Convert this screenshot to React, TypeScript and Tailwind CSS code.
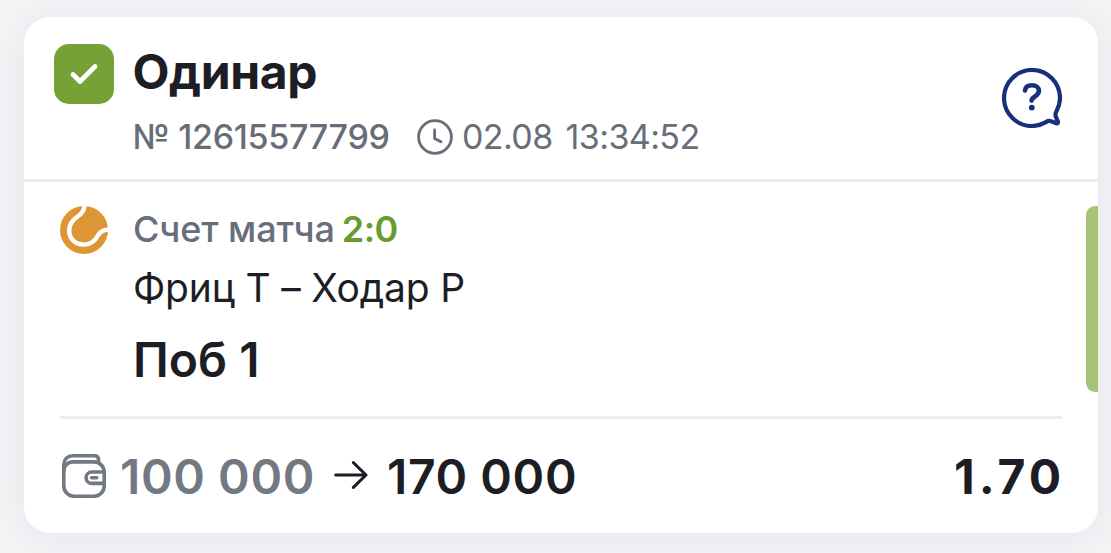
import { FunctionComponent } from "react";

type IconProps = {
  className?: string;
};

const CheckIcon: FunctionComponent<IconProps> = ({ className = "" }) => (
  <svg className={className} viewBox="0 0 60 60" fill="none">
    <path
      d="M19 30.5 L26 37.5 L41 22.5"
      stroke="white"
      strokeWidth="4.8"
      strokeLinecap="round"
      strokeLinejoin="round"
    />
  </svg>
);

const ClockIcon: FunctionComponent<IconProps> = ({ className = "" }) => (
  <svg className={className} viewBox="0 0 36 36" fill="none" stroke="currentColor">
    <circle cx="18" cy="18" r="16.4" strokeWidth="2.8" />
    <path d="M17.6 11 V19.4 L24 22.8" strokeWidth="2.8" strokeLinecap="round" strokeLinejoin="round" />
  </svg>
);

const QuestionIcon: FunctionComponent<IconProps> = ({ className = "" }) => (
  <svg className={className} viewBox="0 0 60 60" fill="none" stroke="currentColor">
    <path
      d="M46 53 C44 54 38.5 58 30 58 A28 28 0 1 1 58 30 C58 36 55.8 40.8 54.4 43.4 C53.2 45.8 53.2 46.8 53.7 48.4 L55.9 53.6 C56.3 54.9 55.6 55.6 54.2 55.2 L49.6 53.4 C48.2 52.9 47.4 52.4 46 53 Z"
      strokeWidth="4.2"
      strokeLinejoin="round"
    />
    <path
      d="M23 22.4 C23.4 19 26.2 17.2 30 17.2 C34 17.2 36.9 19.4 36.9 22.8 C36.9 26 34.8 27.3 32.4 29 C30.4 30.4 29.6 31.2 29.6 32.6"
      strokeWidth="4.6"
      strokeLinecap="round"
    />
    <circle cx="29.8" cy="39.6" r="2.9" fill="currentColor" stroke="none" />
  </svg>
);

const TennisIcon: FunctionComponent<IconProps> = ({ className = "" }) => (
  <svg className={className} viewBox="0 0 48 48" fill="none">
    <circle cx="24" cy="24" r="24" fill="#de9534" />
    <path
      d="M24.6 -1 C24.4 3 22.8 6.4 19.5 9 C14 13 9.2 16.8 9.2 24.4 C9.2 32.8 15.4 38.6 23.6 38.6 C30.4 38.6 34.8 35.2 37.6 30 C39.8 26 43.4 23.6 49 23.4"
      stroke="white"
      strokeWidth="4.4"
    />
  </svg>
);

const WalletIcon: FunctionComponent<IconProps> = ({ className = "" }) => (
  <svg className={className} viewBox="0 0 44 44" fill="none" stroke="currentColor" strokeWidth="3.6">
    <path d="M1.8 17 V10.5 A8.7 8.7 0 0 1 10.5 1.8 H32 Q36.3 1.8 36.6 5.5 V8" strokeLinecap="round" />
    <path d="M1.8 17 A9.2 9.2 0 0 1 11 7.9 H32 A10.2 10.2 0 0 1 42.2 18 V32 A10.2 10.2 0 0 1 32 42.2 H12 A10.2 10.2 0 0 1 1.8 32 Z" />
    <path d="M42 18 H29.8 A5.7 5.7 0 0 0 29.8 29.4 H42" />
    <path d="M29.6 23.7 H34.8" strokeLinecap="round" />
  </svg>
);

const ArrowIcon: FunctionComponent<IconProps> = ({ className = "" }) => (
  <svg
    className={className}
    viewBox="0 0 34 28"
    fill="none"
    stroke="currentColor"
    strokeWidth="3"
    strokeLinecap="round"
    strokeLinejoin="round"
  >
    <path d="M1.7 14 H32 M19.4 1.6 L32 14 L19.4 26.4" />
  </svg>
);

const BetHeader = () => (
  <div className="flex h-[165px] items-start border-b-3 border-[#ebecee] pl-[30px] pr-9 pt-[25px]">
    <div className="mt-0.5 size-[60px] shrink-0 rounded-[15px] bg-[#75a136]">
      <CheckIcon className="size-full" />
    </div>
    <div className="ml-[18.5px] flex-1">
      <h1 className="text-[48px] leading-[60px] font-bold tracking-[-0.4px]">{bet.title}</h1>
      <div className="mt-[15px] flex items-center text-[34px] leading-10 text-[#676e79]">
        <span className="w-[284.5px] font-medium tracking-[-0.3px]">№ {bet.number}</span>
        <ClockIcon className="size-9 shrink-0" />
        <span className="ml-[9px] tracking-[-0.6px] [word-spacing:4px]">{bet.date}</span>
      </div>
    </div>
    <QuestionIcon className="mt-[26px] size-[60px] text-[#182f7c]" />
  </div>
);

const BetEvent = () => (
  <div className="flex h-[234px] justify-between">
    <div className="flex pl-9 pt-6">
      <TennisIcon className="size-12 shrink-0" />
      <div className="ml-[25px] pt-px">
        <div className="flex gap-[7px] text-[36px] leading-11">
          <span className="font-medium tracking-[-0.1px] text-[#676e7d]">Счет матча</span>
          <span className="font-semibold tracking-[-0.6px] text-[#699c2d]">{bet.score}</span>
        </div>
        <div className="mt-[13px] text-[39px] leading-12 tracking-[-0.2px]">{bet.players}</div>
        <div className="mt-[18px] text-[48px] leading-[60px] font-semibold">{bet.outcome}</div>
      </div>
    </div>
    <div className="mt-6 h-[186px] w-3 rounded-l-[9px] bg-[#a4c478]" />
  </div>
);

const BetFooter = () => (
  <div className="mx-9 flex items-center border-t-3 border-[#ebecf1] pt-7 text-[48px] leading-[60px] font-semibold">
    <WalletIcon className="-mt-0.5 ml-0.5 size-11 text-[#737983]" />
    <span className="ml-[14px] w-[214px] whitespace-nowrap tracking-[0.6px] text-[#737983]">{bet.stake}</span>
    <ArrowIcon className="-mt-1 h-7 w-[34px]" />
    <span className="ml-[19px] tracking-[0.6px]">{bet.payout}</span>
    <span className="-mr-[3px] ml-auto font-bold tracking-[4px]">{bet.odds}</span>
  </div>
);

const App = () => (
  <div className="h-[553px] overflow-hidden bg-[#f4f5f6] pl-6 pr-[13px] pt-[17px] font-['Inter',sans-serif] text-[#1c1e24]">
    <div className="h-[516px] overflow-hidden rounded-[26px] bg-white shadow-[0_4px_36px_6px_#e7e8ee]">
      <BetHeader />
      <BetEvent />
      <BetFooter />
    </div>
  </div>
);

// Data for the bet card
const bet = {
  title: "Одинар",
  number: "12615577799",
  date: "02.08 13:34:52",
  score: "2:0",
  players: "Фриц Т – Ходар Р",
  outcome: "Поб 1",
  stake: "100 000",
  payout: "170 000",
  odds: "1.70",
};

export default App;
